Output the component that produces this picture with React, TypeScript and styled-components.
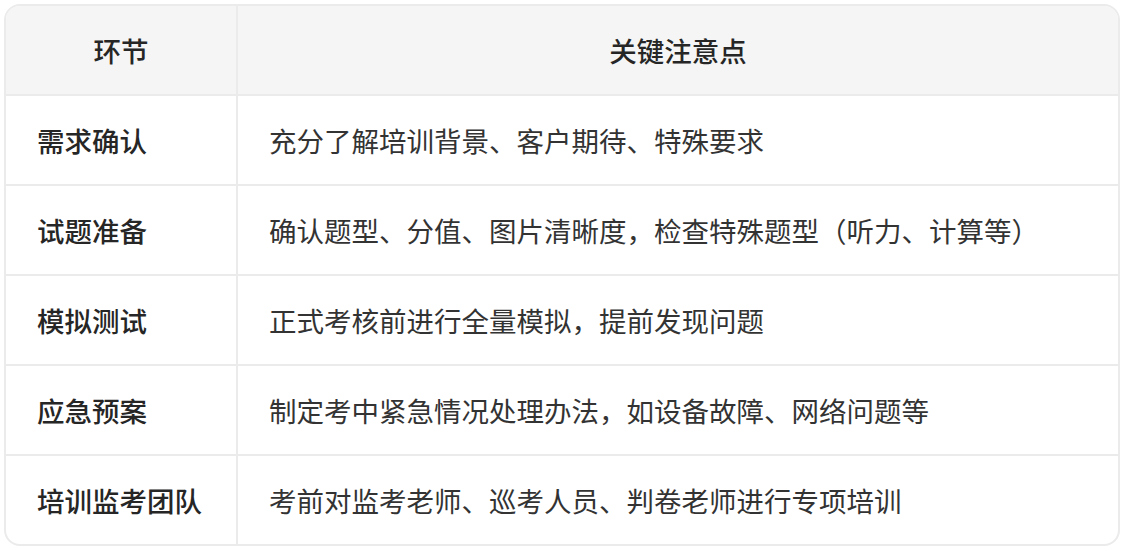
import styled, { createGlobalStyle } from "styled-components";

const GlobalStyle = createGlobalStyle`
  body {
    margin: 0;
    background: #ffffff;
    font-family: "Noto Sans CJK SC", "Noto Sans", sans-serif;
  }
`;

const Page = styled.div`
  padding: 4px 12px 8px 4px;
`;

const Frame = styled.div`
  border: 2px solid #ebebeb;
  border-radius: 16px;
  overflow: hidden;
  width: 1116px;
  box-sizing: border-box;
`;

const Table = styled.table`
  width: 100%;
  border-collapse: separate;
  border-spacing: 0;
  table-layout: fixed;
`;

const HeadCell = styled.th`
  height: 88px;
  background: #f5f5f5;
  color: #262626;
  font-size: 27.5px;
  font-weight: 500;
  text-align: center;
  padding: 0;
  border-bottom: 2px solid #ebebeb;
  border-right: 2px solid #ebebeb;
  &:last-child {
    border-right: none;
  }
`;

const Cell = styled.td<{ $strong?: boolean; $last?: boolean }>`
  height: 88px;
  padding: 0 32px 0 31px;
  font-size: 27.5px;
  color: ${(p) => (p.$strong ? "#262626" : "#333333")};
  font-weight: ${(p) => (p.$strong ? 500 : 400)};
  white-space: nowrap;
  border-bottom: ${(p) => (p.$last ? "none" : "2px solid #ebebeb")};
  border-right: 2px solid #ebebeb;
  &:last-child {
    border-right: none;
  }
`;

const rows = [
  ["需求确认", "充分了解培训背景、客户期待、特殊要求"],
  ["试题准备", "确认题型、分值、图片清晰度，检查特殊题型（听力、计算等）"],
  ["模拟测试", "正式考核前进行全量模拟，提前发现问题"],
  ["应急预案", "制定考中紧急情况处理办法，如设备故障、网络问题等"],
  ["培训监考团队", "考前对监考老师、巡考人员、判卷老师进行专项培训"],
];

function App() {
  return (
    <Page>
      <GlobalStyle />
      <Frame>
        <Table>
          <colgroup>
            <col style={{ width: "232px" }} />
            <col />
          </colgroup>
          <thead>
            <tr>
              <HeadCell>环节</HeadCell>
              <HeadCell>关键注意点</HeadCell>
            </tr>
          </thead>
          <tbody>
            {rows.map(([step, note], i) => (
              <tr key={step}>
                <Cell $strong $last={i === rows.length - 1}>
                  {step}
                </Cell>
                <Cell $last={i === rows.length - 1}>{note}</Cell>
              </tr>
            ))}
          </tbody>
        </Table>
      </Frame>
    </Page>
  );
}

export default App;
